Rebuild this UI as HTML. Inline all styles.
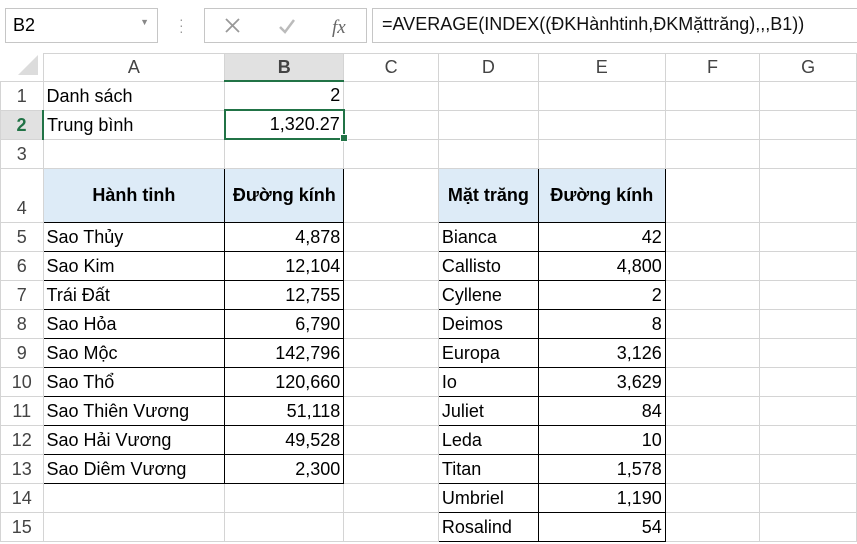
<!DOCTYPE html>
<html><head><meta charset="utf-8"><style>
body{margin:0;width:857px;height:544px;overflow:hidden;background:#fff;font-family:"Liberation Sans",Arial,sans-serif;position:relative}
.box{position:absolute;border:1px solid #c6c6c6;background:#fff;box-sizing:border-box}
table{position:absolute;left:0;top:53px;border-collapse:collapse;table-layout:fixed}
td{border:1px solid #d4d4d4;padding:0 3px;font-size:18px;color:#000;white-space:nowrap;overflow:hidden;height:29px;box-sizing:border-box;vertical-align:bottom;line-height:27px}
tr.h td{text-align:center;color:#444;height:26px;vertical-align:middle;font-size:18px;line-height:22px}
td.rh{text-align:center;color:#444;padding:0}
td.sel{background:#e1e1e1;color:#217346;font-weight:bold}
td.selc{border-bottom:2px solid #217346}
td.r{text-align:right}
.t{border:1px solid #000}
.th{background:#ddebf7;font-weight:bold;text-align:center;vertical-align:middle}
</style></head><body>
<div class="box" style="left:5px;top:8px;width:153px;height:35px;font-size:18px;padding:6px 0 0 7px">B2<span style="position:absolute;right:8px;top:8px;font-size:9px;color:#888">▼</span></div>
<div style="position:absolute;left:179px;top:16px;width:3px;height:18px;color:#999;font-size:14px;line-height:6px">·<br>·<br>·</div>
<div class="box" style="left:204px;top:8px;width:163px;height:35px">
<svg width="163" height="33" style="position:absolute;left:0;top:0"><path d="M21 10l13 13M34 10l-13 13" stroke="#999" stroke-width="1.8"/><path d="M75 18l5 5 9-12" stroke="#bbb" stroke-width="2.5" fill="none"/><text x="127" y="24" font-family="Liberation Serif" font-style="italic" font-size="19" fill="#666">fx</text></svg></div>
<div class="box" style="left:372px;top:8px;width:490px;height:35px;font-size:18px;padding:5px 0 0 9px;color:#111">=AVERAGE(INDEX((ĐKHànhtinh,ĐKMặttrăng),,,B1))</div>
<table>
<colgroup><col style="width:42px"><col style="width:182px"><col style="width:119px"><col style="width:95px"><col style="width:100px"><col style="width:127px"><col style="width:95px"><col style="width:97px"></colgroup>
<tr class="h"><td style="border-left:none;border-top:none"><svg width="36" height="22"><path d="M34 1L34 21L14 21Z" fill="#dcdcdc"/></svg></td><td>A</td><td class="sel selc">B</td><td>C</td><td>D</td><td>E</td><td>F</td><td>G</td></tr>
<tr><td class="rh">1</td><td>Danh sách</td><td class="r">2</td><td></td><td></td><td></td><td></td><td></td></tr>
<tr><td class="rh sel" style="border-right:2px solid #217346">2</td><td>Trung bình</td><td class="r" style="border:2px solid #217346">1,320.27</td><td></td><td></td><td></td><td></td><td></td></tr>
<tr><td class="rh">3</td><td></td><td></td><td></td><td></td><td></td><td></td><td></td></tr>
<tr><td class="rh" style="height:54px">4</td><td class="t th">Hành tinh</td><td class="t th">Đường kính</td><td></td><td class="t th">Mặt trăng</td><td class="t th">Đường kính</td><td></td><td></td></tr>
<tr><td class="rh">5</td><td class="t">Sao Thủy</td><td class="t r">4,878</td><td></td><td class="t">Bianca</td><td class="t r">42</td><td></td><td></td></tr>
<tr><td class="rh">6</td><td class="t">Sao Kim</td><td class="t r">12,104</td><td></td><td class="t">Callisto</td><td class="t r">4,800</td><td></td><td></td></tr>
<tr><td class="rh">7</td><td class="t">Trái Đất</td><td class="t r">12,755</td><td></td><td class="t">Cyllene</td><td class="t r">2</td><td></td><td></td></tr>
<tr><td class="rh">8</td><td class="t">Sao Hỏa</td><td class="t r">6,790</td><td></td><td class="t">Deimos</td><td class="t r">8</td><td></td><td></td></tr>
<tr><td class="rh">9</td><td class="t">Sao Mộc</td><td class="t r">142,796</td><td></td><td class="t">Europa</td><td class="t r">3,126</td><td></td><td></td></tr>
<tr><td class="rh">10</td><td class="t">Sao Thổ</td><td class="t r">120,660</td><td></td><td class="t">Io</td><td class="t r">3,629</td><td></td><td></td></tr>
<tr><td class="rh">11</td><td class="t">Sao Thiên Vương</td><td class="t r">51,118</td><td></td><td class="t">Juliet</td><td class="t r">84</td><td></td><td></td></tr>
<tr><td class="rh">12</td><td class="t">Sao Hải Vương</td><td class="t r">49,528</td><td></td><td class="t">Leda</td><td class="t r">10</td><td></td><td></td></tr>
<tr><td class="rh">13</td><td class="t">Sao Diêm Vương</td><td class="t r">2,300</td><td></td><td class="t">Titan</td><td class="t r">1,578</td><td></td><td></td></tr>
<tr><td class="rh">14</td><td></td><td></td><td></td><td class="t">Umbriel</td><td class="t r">1,190</td><td></td><td></td></tr>
<tr><td class="rh">15</td><td></td><td></td><td></td><td class="t">Rosalind</td><td class="t r">54</td><td></td><td></td></tr>
</table>
<div style="position:absolute;left:340px;top:134px;width:6px;height:6px;background:#217346;border:1px solid #fff"></div>
</body></html>
